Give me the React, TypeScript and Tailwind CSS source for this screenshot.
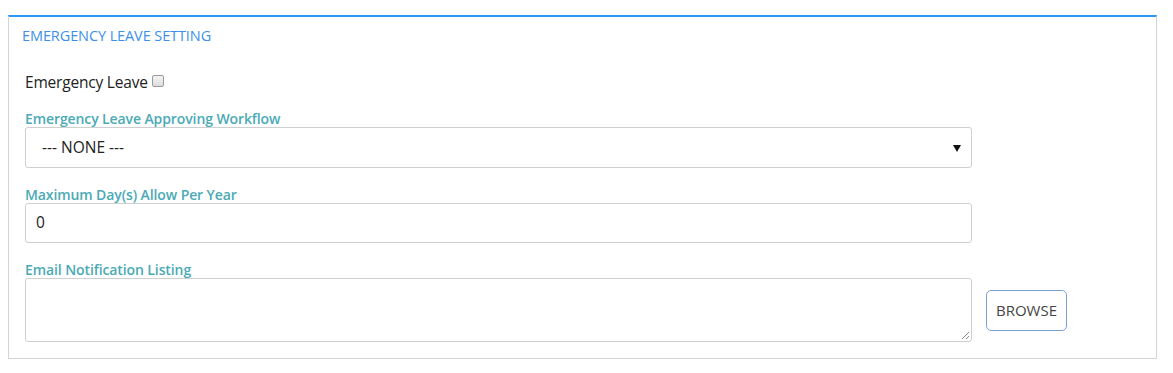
import React from "react";

export default function App() {
  const font = { fontFamily: '"Open Sans", "Noto Sans", sans-serif' };
  return (
    <div className="bg-white w-[1173px] h-[373px] pt-[15px] pl-[8px]" style={font}>
      <div className="w-[1149px] h-[344px] border-t-2 border-t-[#2e96f3] border-x border-b border-[#d4d4d4] bg-white">
        <div className="h-[36px] flex items-center pl-[13px] pt-[1px] text-[14.5px] text-[#3d8fe8] tracking-[-0.1px]">
          EMERGENCY LEAVE SETTING
        </div>
        <div className="pl-[16px]">
          <div className="mt-[19px] h-[22px] flex items-center text-[15.5px] text-[#222] tracking-[-0.2px]">
            <span>Emergency Leave</span>
            <span className="ml-[4px] mt-[-5px] w-[12px] h-[12px] rounded-[2px] border border-[#9a9a9a] bg-gradient-to-b from-[#f4f4f4] to-[#dcdcdc]" />
          </div>
          <div className="mt-[16px] h-[16px] flex items-center text-[14px] font-semibold text-[#4aaab6] tracking-[-0.1px]">
            Emergency Leave Approving Workflow
          </div>
          <div className="mt-[1px] w-[947px] h-[41px] rounded-[3px] border border-[#cfcfcf] flex items-center justify-between pl-[16px] pr-[10px] text-[15.5px] text-[#222]">
            <span>--- NONE ---</span>
            <svg width="8" height="8" viewBox="0 0 8 8"><path d="M0 1 L8 1 L4 8 Z" fill="#111" /></svg>
          </div>
          <div className="mt-[18px] h-[16px] flex items-center text-[14px] font-semibold text-[#4aaab6] tracking-[-0.1px]">
            Maximum Day(s) Allow Per Year
          </div>
          <div className="mt-[1px] w-[947px] h-[40px] rounded-[3px] border border-[#cfcfcf] flex items-center pl-[10px] text-[15.5px] text-[#222]">
            0
          </div>
          <div className="mt-[18px] h-[16px] flex items-center text-[14px] font-semibold text-[#4aaab6] tracking-[-0.1px]">
            Email Notification Listing
          </div>
          <div className="mt-[1px] flex items-center">
            <div className="relative w-[947px] h-[64px] rounded-[3px] border border-[#cfcfcf]">
              <svg className="absolute right-[1px] bottom-[1px]" width="9" height="9" viewBox="0 0 9 9">
                <path d="M8 1 L1 8 M8 5 L5 8" stroke="#888" strokeWidth="1" />
              </svg>
            </div>
            <div className="ml-[14px] w-[81px] h-[41px] rounded-[5px] border border-[#7e9fd6] flex items-center justify-center text-[15px] text-[#444]">
              BROWSE
            </div>
          </div>
        </div>
      </div>
    </div>
  );
}
